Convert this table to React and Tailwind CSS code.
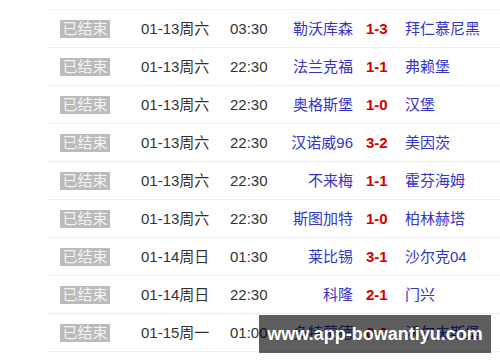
import React from "react";

const rows = [
  ["01-13周六", "03:30", "勒沃库森", "1-3", "拜仁慕尼黑"],
  ["01-13周六", "22:30", "法兰克福", "1-1", "弗赖堡"],
  ["01-13周六", "22:30", "奥格斯堡", "1-0", "汉堡"],
  ["01-13周六", "22:30", "汉诺威96", "3-2", "美因茨"],
  ["01-13周六", "22:30", "不来梅", "1-1", "霍芬海姆"],
  ["01-13周六", "22:30", "斯图加特", "1-0", "柏林赫塔"],
  ["01-14周日", "01:30", "莱比锡", "3-1", "沙尔克04"],
  ["01-14周日", "22:30", "科隆", "2-1", "门兴"],
  ["01-15周一", "01:00", "多特蒙德", "0-0", "沃尔夫斯堡"],
];

export default function App() {
  return (
    <div
      className="relative w-[500px] h-[362px] overflow-hidden bg-white"
      style={{ fontFamily: '"Liberation Sans", Arial, "Noto Sans CJK SC", sans-serif' }}
    >
      <div className="ml-[48px] mt-[9px] w-[460px] border-t border-[#f2f2f2]">
        {rows.map((r, i) => (
          <div
            key={i}
            className="flex items-center h-[38px] border-b border-[#eeeeee] text-[15px] leading-none"
          >
            <div className="w-[93px] pl-[12px]">
              <span className="inline-flex items-center justify-center w-[50px] h-[18px] bg-[#bbbbbb] text-[#f4f4f4] text-[15px]">
                已结束
              </span>
            </div>
            <div className="w-[89px] text-[#333333]">{r[0]}</div>
            <div className="w-[50px] text-[#333333]">{r[1]}</div>
            <div className="w-[73px] text-right text-[#3535c8] whitespace-nowrap">{r[2]}</div>
            <div className="w-[52px] pl-[13px] font-bold text-[#d40000]">{r[3]}</div>
            <div className="flex-1 text-[#3535c8] whitespace-nowrap">{r[4]}</div>
          </div>
        ))}
      </div>
      <div className="absolute left-[259px] top-[315px] w-[232px] h-[38px] bg-[rgba(0,0,0,0.63)] flex items-center justify-center">
        <span className="text-white font-bold text-[18px] leading-none">www.app-bowantiyu.com</span>
      </div>
    </div>
  );
}
